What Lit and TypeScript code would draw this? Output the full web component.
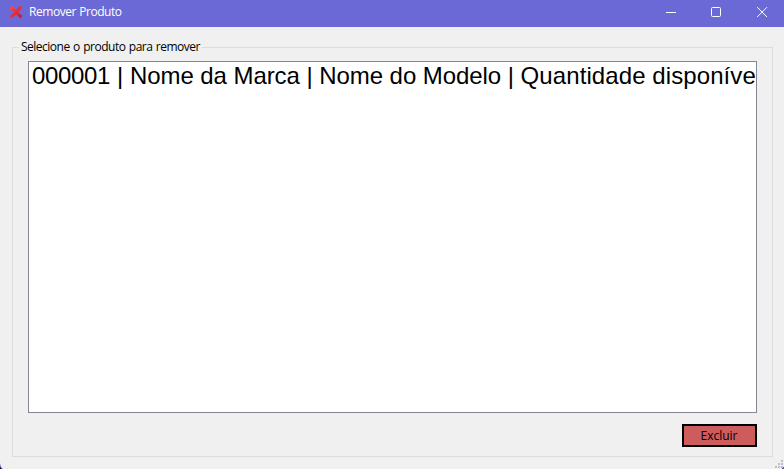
import { LitElement, html, css, svg } from "lit";
import { customElement } from "lit/decorators.js";

@customElement("title-bar")
class TitleBar extends LitElement {
  static styles = css`
    :host {
      display: flex;
      align-items: center;
      height: 27px;
      flex: none;
      background: #6b69d6;
      color: #fff;
      box-sizing: border-box;
      padding: 0 0 3px 8px;
    }
    .icon { width: 16px; height: 16px; margin-top: -1px; }
    .title {
      flex: 1;
      margin-left: 5px;
      font-size: 12px;
      line-height: 16px;
      letter-spacing: -0.45px;
      word-spacing: 0.6px;
      white-space: nowrap;
    }
    .controls { display: flex; }
    .control { width: 46px; height: 23px; display: block; }
  `;
  render() {
    return html`
      <svg class="icon" viewBox="0 0 16 16">
        <defs>
          <linearGradient id="red" x1="0" y1="0" x2="1" y2="1">
            <stop offset="0" stop-color="#ff5049" />
            <stop offset="1" stop-color="#c80f2d" />
          </linearGradient>
        </defs>
        <path fill="url(#red)" d="M1.6 3.9 4.1 1.6 8 5.9 11.9 1.5 14.2 3.4 10.1 7.9 14.4 12 12.2 14.2 8 10.2 3.8 14.2 1.7 12.2 5.8 8Z" />
      </svg>
      <span class="title">Remover Produto</span>
      <div class="controls">
        ${[
          svg`<path d="M20 11.5h10" />`,
          svg`<rect x="19.5" y="6.5" width="9" height="9" rx="1" />`,
          svg`<path d="M19.2 6.2l9.8 9.8M29 6.2l-9.8 9.8" />`,
        ].map(
          (g) => html`<svg class="control" viewBox="0 0 46 23" fill="none" stroke="#fff" stroke-width="1">${g}</svg>`
        )}
      </div>
    `;
  }
}

@customElement("app-root")
class AppRoot extends LitElement {
  static styles = css`
    :host {
      display: flex;
      flex-direction: column;
      position: relative;
      width: 784px;
      height: 469px;
      overflow: hidden;
      box-sizing: border-box;
      background: #f0f0f0;
      color: #000;
      font-family: "Segoe UI", "Open Sans", "Noto Sans", sans-serif;
    }
    .body { flex: 1; display: flex; min-width: 0; padding: 20px 11px 12px 12px; }
    .group {
      flex: 1;
      min-width: 0;
      display: flex;
      flex-direction: column;
      border: 1px solid #dcdcdc;
      padding: 0 15px 9px;
    }
    .legend {
      align-self: flex-start;
      margin: -9px 0 0 -9px;
      padding: 0 2px;
      background: #f0f0f0;
      font-size: 12px;
      line-height: 16px;
      height: 16px;
      letter-spacing: -0.5px;
      word-spacing: 0.8px;
      white-space: nowrap;
    }
    .list {
      flex: 1;
      min-width: 0;
      margin-top: 6px;
      border: 1px solid #828790;
      background: #fff;
      overflow: hidden;
      padding: 0 0 0 3px;
    }
    .item {
      font-family: "Liberation Sans", Arial, sans-serif;
      font-size: 24px;
      line-height: 28px;
      letter-spacing: -0.06px;
      white-space: nowrap;
    }
    .code { letter-spacing: -0.33px; margin-right: 0.4px; }
    .stock { letter-spacing: 0.09px; }
    .delete {
      align-self: flex-end;
      margin-top: 11px;
      width: 75px;
      height: 23px;
      box-sizing: border-box;
      border: 2px solid #000;
      background: #cd5c5c;
      color: #000;
      font: inherit;
      font-size: 12px;
      line-height: 19px;
      padding: 0 1px 0 0;
      text-align: center;
    }
    .grip { position: absolute; right: 0; bottom: 0; width: 10px; height: 10px; }
    .corner { position: absolute; left: 0; bottom: 0; width: 4px; height: 6px; }
  `;
  render() {
    return html`
      <title-bar></title-bar>
      <div class="body">
        <div class="group">
          <div class="legend">Selecione o produto para remover</div>
          <div class="list">
            <div class="item"><span class="code">000001</span> | Nome da Marca | Nome do Modelo | <span class="stock">Quantidade disponíve</span></div>
          </div>
          <button class="delete">Excluir</button>
        </div>
      </div>
      <svg class="grip" viewBox="0 0 10 10" fill="#bfbfbf" shape-rendering="crispEdges">
        <path d="M7 1h2v2h-2zM4 4h2v2h-2zM7 4h2v2h-2zM1 7h2v2h-2zM4 7h2v2h-2zM7 7h2v2h-2z" />
        <path fill="#5651b8" d="M10 8v2h-2v-1h1v-1z" />
      </svg>
      <svg class="corner" viewBox="0 0 4 6">
        <path fill="#8a88dc" d="M0 0Q.5 4 3 6H0Z" />
        <path fill="#15103c" d="M0 3Q.5 5 2 6H0Z" />
      </svg>
    `;
  }
}
